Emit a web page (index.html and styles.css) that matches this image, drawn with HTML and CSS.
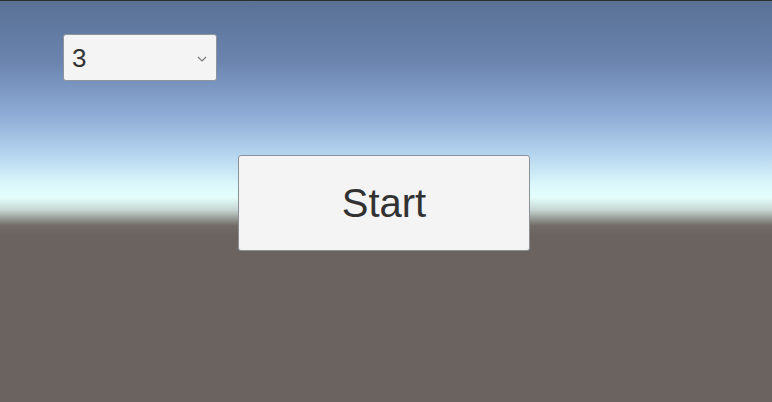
FILE: index.html
```html
<!DOCTYPE html>
<html>
<head>
<meta charset="utf-8">
<link rel="stylesheet" href="styles.css">
</head>
<body>
<div class="scene">
  <div class="dropdown">
    <span class="dropdown-label">3</span>
    <svg class="chevron" width="10" height="6" viewBox="0 0 10 6"><path d="M1 1 L5 5 L9 1" fill="none" stroke="#7a7a7a" stroke-width="1.2"/></svg>
  </div>
  <button class="start">Start</button>
</div>
</body>
</html>
```
FILE: styles.css
```css
html, body {
  margin: 0;
  padding: 0;
  width: 772px;
  height: 402px;
  overflow: hidden;
}
.scene {
  width: 772px;
  height: 402px;
  box-sizing: border-box;
  border-top: 1px solid #2e2e2e;
  background: linear-gradient(to bottom,
    #5a7196 0px,
    #6a84ae 60px,
    #8caad3 112px,
    #b3d3ee 152px,
    #d9f6fb 182px,
    #e4fefc 196px,
    #c6d6d2 209px,
    #949793 218px,
    #716a66 225px,
    #6b635f 234px,
    #6b635f 402px);
  font-family: "Liberation Sans", Arial, sans-serif;
  display: flex;
  flex-direction: column;
  align-items: flex-start;
}
.dropdown {
  margin: 33px 0 0 63px;
  width: 154px;
  height: 47px;
  box-sizing: border-box;
  border: 1px solid #8f949b;
  border-radius: 3px;
  background: #f4f4f4;
  display: flex;
  align-items: center;
  justify-content: space-between;
  padding: 1px 9px 0 8px;
}
.dropdown-label {
  font-size: 26px;
  color: #323232;
}
.chevron {
  display: block;
  margin-top: 1px;
}
.start {
  margin: 74px 0 0 238px;
  width: 292px;
  height: 96px;
  box-sizing: border-box;
  border: 1px solid #8a8f96;
  border-radius: 3px;
  background: #f4f4f4;
  font-family: "Liberation Sans", Arial, sans-serif;
  font-size: 40px;
  color: #323232;
  padding: 0;
  cursor: pointer;
}
```
